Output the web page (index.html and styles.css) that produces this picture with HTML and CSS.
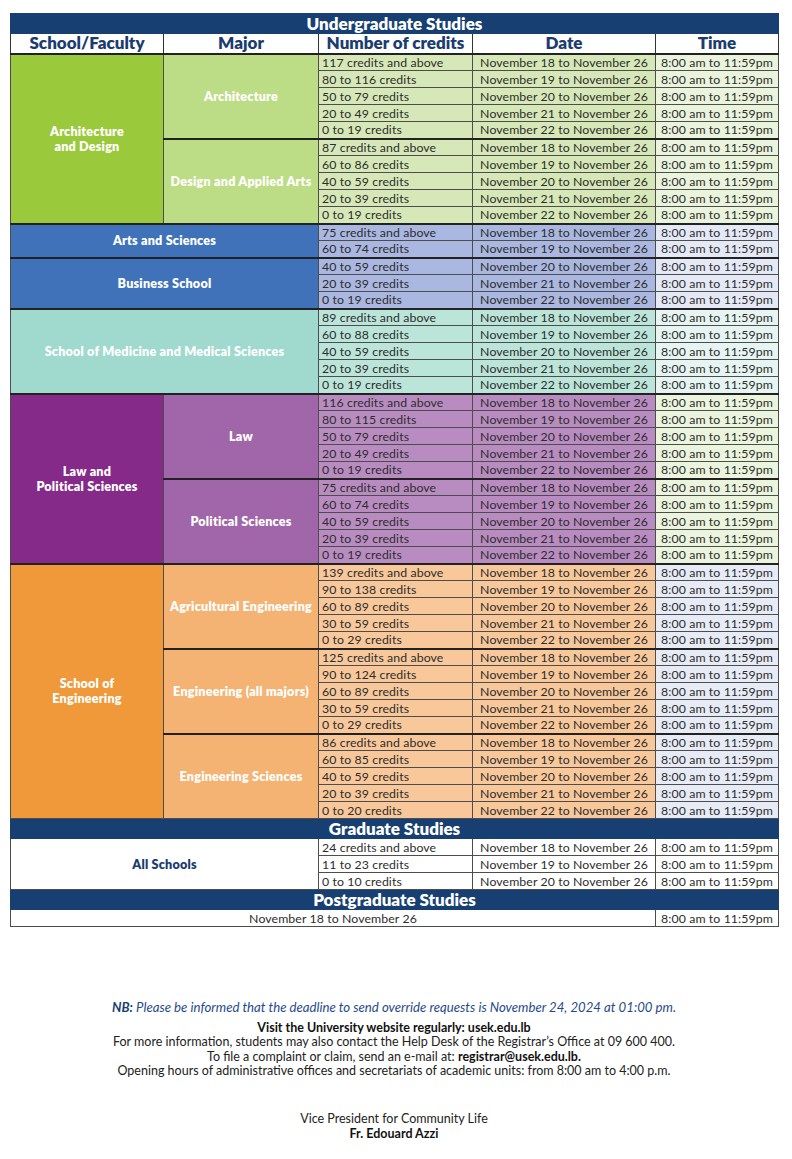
FILE: index.html
```html
<!DOCTYPE html>
<html>
<head>
<meta charset="utf-8">
<link rel="stylesheet" href="styles.css">
</head>
<body>
<div class="page">
<table class="sched">
<colgroup><col class="c1"><col class="c2"><col class="c3"><col class="c4"><col class="c5"></colgroup>
<tr class="band"><th colspan="5">Undergraduate Studies</th></tr>
<tr class="head"><th>School/Faculty</th><th>Major</th><th>Number of credits</th><th>Date</th><th>Time</th></tr>

<tr class="arch top"><td class="school" rowspan="10">Architecture<br>and Design</td><td class="major" rowspan="5">Architecture</td><td class="cr">117 credits and above</td><td class="dt">November 18 to November 26</td><td class="tm">8:00 am to 11:59pm</td></tr>
<tr class="arch"><td class="cr">80 to 116 credits</td><td class="dt">November 19 to November 26</td><td class="tm">8:00 am to 11:59pm</td></tr>
<tr class="arch"><td class="cr">50 to 79 credits</td><td class="dt">November 20 to November 26</td><td class="tm">8:00 am to 11:59pm</td></tr>
<tr class="arch"><td class="cr">20 to 49 credits</td><td class="dt">November 21 to November 26</td><td class="tm">8:00 am to 11:59pm</td></tr>
<tr class="arch"><td class="cr">0 to 19 credits</td><td class="dt">November 22 to November 26</td><td class="tm">8:00 am to 11:59pm</td></tr>
<tr class="arch top"><td class="major" rowspan="5">Design and Applied Arts</td><td class="cr">87 credits and above</td><td class="dt">November 18 to November 26</td><td class="tm">8:00 am to 11:59pm</td></tr>
<tr class="arch"><td class="cr">60 to 86 credits</td><td class="dt">November 19 to November 26</td><td class="tm">8:00 am to 11:59pm</td></tr>
<tr class="arch"><td class="cr">40 to 59 credits</td><td class="dt">November 20 to November 26</td><td class="tm">8:00 am to 11:59pm</td></tr>
<tr class="arch"><td class="cr">20 to 39 credits</td><td class="dt">November 21 to November 26</td><td class="tm">8:00 am to 11:59pm</td></tr>
<tr class="arch"><td class="cr">0 to 19 credits</td><td class="dt">November 22 to November 26</td><td class="tm">8:00 am to 11:59pm</td></tr>

<tr class="arts top"><td class="school" colspan="2" rowspan="2">Arts and Sciences</td><td class="cr">75 credits and above</td><td class="dt">November 18 to November 26</td><td class="tm">8:00 am to 11:59pm</td></tr>
<tr class="arts"><td class="cr">60 to 74 credits</td><td class="dt">November 19 to November 26</td><td class="tm">8:00 am to 11:59pm</td></tr>
<tr class="arts top"><td class="school" colspan="2" rowspan="3">Business School</td><td class="cr">40 to 59 credits</td><td class="dt">November 20 to November 26</td><td class="tm">8:00 am to 11:59pm</td></tr>
<tr class="arts"><td class="cr">20 to 39 credits</td><td class="dt">November 21 to November 26</td><td class="tm">8:00 am to 11:59pm</td></tr>
<tr class="arts"><td class="cr">0 to 19 credits</td><td class="dt">November 22 to November 26</td><td class="tm">8:00 am to 11:59pm</td></tr>

<tr class="med top"><td class="school" colspan="2" rowspan="5">School of Medicine and Medical Sciences</td><td class="cr">89 credits and above</td><td class="dt">November 18 to November 26</td><td class="tm">8:00 am to 11:59pm</td></tr>
<tr class="med"><td class="cr">60 to 88 credits</td><td class="dt">November 19 to November 26</td><td class="tm">8:00 am to 11:59pm</td></tr>
<tr class="med"><td class="cr">40 to 59 credits</td><td class="dt">November 20 to November 26</td><td class="tm">8:00 am to 11:59pm</td></tr>
<tr class="med"><td class="cr">20 to 39 credits</td><td class="dt">November 21 to November 26</td><td class="tm">8:00 am to 11:59pm</td></tr>
<tr class="med"><td class="cr">0 to 19 credits</td><td class="dt">November 22 to November 26</td><td class="tm">8:00 am to 11:59pm</td></tr>

<tr class="law top"><td class="school" rowspan="10">Law and<br>Political Sciences</td><td class="major" rowspan="5">Law</td><td class="cr">116 credits and above</td><td class="dt">November 18 to November 26</td><td class="tm">8:00 am to 11:59pm</td></tr>
<tr class="law"><td class="cr">80 to 115 credits</td><td class="dt">November 19 to November 26</td><td class="tm">8:00 am to 11:59pm</td></tr>
<tr class="law"><td class="cr">50 to 79 credits</td><td class="dt">November 20 to November 26</td><td class="tm">8:00 am to 11:59pm</td></tr>
<tr class="law"><td class="cr">20 to 49 credits</td><td class="dt">November 21 to November 26</td><td class="tm">8:00 am to 11:59pm</td></tr>
<tr class="law"><td class="cr">0 to 19 credits</td><td class="dt">November 22 to November 26</td><td class="tm">8:00 am to 11:59pm</td></tr>
<tr class="law top"><td class="major" rowspan="5">Political Sciences</td><td class="cr">75 credits and above</td><td class="dt">November 18 to November 26</td><td class="tm">8:00 am to 11:59pm</td></tr>
<tr class="law"><td class="cr">60 to 74 credits</td><td class="dt">November 19 to November 26</td><td class="tm">8:00 am to 11:59pm</td></tr>
<tr class="law"><td class="cr">40 to 59 credits</td><td class="dt">November 20 to November 26</td><td class="tm">8:00 am to 11:59pm</td></tr>
<tr class="law"><td class="cr">20 to 39 credits</td><td class="dt">November 21 to November 26</td><td class="tm">8:00 am to 11:59pm</td></tr>
<tr class="law"><td class="cr">0 to 19 credits</td><td class="dt">November 22 to November 26</td><td class="tm">8:00 am to 11:59pm</td></tr>

<tr class="eng top"><td class="school" rowspan="15">School of<br>Engineering</td><td class="major" rowspan="5">Agricultural Engineering</td><td class="cr">139 credits and above</td><td class="dt">November 18 to November 26</td><td class="tm">8:00 am to 11:59pm</td></tr>
<tr class="eng"><td class="cr">90 to 138 credits</td><td class="dt">November 19 to November 26</td><td class="tm">8:00 am to 11:59pm</td></tr>
<tr class="eng"><td class="cr">60 to 89 credits</td><td class="dt">November 20 to November 26</td><td class="tm">8:00 am to 11:59pm</td></tr>
<tr class="eng"><td class="cr">30 to 59 credits</td><td class="dt">November 21 to November 26</td><td class="tm">8:00 am to 11:59pm</td></tr>
<tr class="eng"><td class="cr">0 to 29 credits</td><td class="dt">November 22 to November 26</td><td class="tm">8:00 am to 11:59pm</td></tr>
<tr class="eng top"><td class="major" rowspan="5">Engineering (all majors)</td><td class="cr">125 credits and above</td><td class="dt">November 18 to November 26</td><td class="tm">8:00 am to 11:59pm</td></tr>
<tr class="eng"><td class="cr">90 to 124 credits</td><td class="dt">November 19 to November 26</td><td class="tm">8:00 am to 11:59pm</td></tr>
<tr class="eng"><td class="cr">60 to 89 credits</td><td class="dt">November 20 to November 26</td><td class="tm">8:00 am to 11:59pm</td></tr>
<tr class="eng"><td class="cr">30 to 59 credits</td><td class="dt">November 21 to November 26</td><td class="tm">8:00 am to 11:59pm</td></tr>
<tr class="eng"><td class="cr">0 to 29 credits</td><td class="dt">November 22 to November 26</td><td class="tm">8:00 am to 11:59pm</td></tr>
<tr class="eng top"><td class="major" rowspan="5">Engineering Sciences</td><td class="cr">86 credits and above</td><td class="dt">November 18 to November 26</td><td class="tm">8:00 am to 11:59pm</td></tr>
<tr class="eng"><td class="cr">60 to 85 credits</td><td class="dt">November 19 to November 26</td><td class="tm">8:00 am to 11:59pm</td></tr>
<tr class="eng"><td class="cr">40 to 59 credits</td><td class="dt">November 20 to November 26</td><td class="tm">8:00 am to 11:59pm</td></tr>
<tr class="eng"><td class="cr">20 to 39 credits</td><td class="dt">November 21 to November 26</td><td class="tm">8:00 am to 11:59pm</td></tr>
<tr class="eng"><td class="cr">0 to 20 credits</td><td class="dt">November 22 to November 26</td><td class="tm">8:00 am to 11:59pm</td></tr>

<tr class="band"><th colspan="5">Graduate Studies</th></tr>
<tr class="grad"><td class="school" colspan="2" rowspan="3">All Schools</td><td class="cr">24 credits and above</td><td class="dt">November 18 to November 26</td><td class="tm">8:00 am to 11:59pm</td></tr>
<tr class="grad"><td class="cr">11 to 23 credits</td><td class="dt">November 19 to November 26</td><td class="tm">8:00 am to 11:59pm</td></tr>
<tr class="grad"><td class="cr">0 to 10 credits</td><td class="dt">November 20 to November 26</td><td class="tm">8:00 am to 11:59pm</td></tr>

<tr class="band"><th colspan="5">Postgraduate Studies</th></tr>
<tr class="grad"><td class="dt" colspan="4">November 18 to November 26</td><td class="tm">8:00 am to 11:59pm</td></tr>
</table>

<div class="notes">
<p class="nb"><b>NB:</b> Please be informed that the deadline to send override requests is November 24, 2024 at 01:00 pm.</p>
<p class="info"><b>Visit the University website regularly: usek.edu.lb</b><br>
For more information, students may also contact the Help Desk of the Registrar’s Office at 09 600 400.<br>
To file a complaint or claim, send an e-mail at: <b>registrar@usek.edu.lb.</b><br>
Opening hours of administrative offices and secretariats of academic units: from 8:00 am to 4:00 p.m.</p>
</div>

<div class="sign">
<p>Vice President for Community Life<br><b>Fr. Edouard Azzi</b></p>
</div>
</div>
</body>
</html>
```

FILE: styles.css
```css
* { box-sizing: border-box; }
html, body { margin: 0; padding: 0; background: #ffffff; }
body { font-family: "Lato", "Open Sans", sans-serif; color: #222; }
.page { width: 792px; padding: 13px 14px 0 10px; }

.sched { width: 768px; border-collapse: collapse; table-layout: fixed; border: 1px solid #888; }
.c1 { width: 153px; } .c2 { width: 155px; } .c3 { width: 154px; } .c4 { width: 183px; } .c5 { width: 123px; }

.sched td, .sched th { padding: 0 3px; border: 1px solid #4d4d4d; white-space: nowrap; overflow: hidden; }
.sched td { height: 17px; font-size: 12.3px; line-height: 15px; color: #2d2d2d; letter-spacing: 0.1px; }

.band th { background: #173f72; color: #fff; font-size: 17px; font-weight: 800; height: 20px; line-height: 18px; padding: 0; border-color: #173f72; }
.head th { background: #fff; color: #1b3c70; font-size: 17px; font-weight: 800; height: 20px; line-height: 18px; border-color: #333; }

.sched td.school, .sched td.major { color: #fff; font-weight: 800; font-size: 12.6px; line-height: 15px; text-align: center; white-space: normal; letter-spacing: 0.2px; padding: 0 2px; }
.cr { text-align: left; }
.dt, .tm { text-align: center; }

.top td { border-top: 2px solid #222; }

.arch .school { background: #9bc93c; }
.arch .major { background: #bddc86; }
.arch .cr, .arch .dt { background: #d7e8b8; }
.arch .tm { background: #eaf3dc; }

.arts .school { background: #3f72b9; }
.arts .cr, .arts .dt { background: #aab7e0; }
.arts .tm { background: #e5e9f6; }

.med .school { background: #a0d9cd; }
.med .cr, .med .dt { background: #bce5da; }
.med .tm { background: #e6f5f1; }

.law .school { background: #852a88; }
.law .major { background: #a066a9; }
.law .cr, .law .dt { background: #b98cc1; }
.law .tm { background: #ebf4dd; }

.eng .school { background: #f0993a; }
.eng .major { background: #f4b373; }
.eng .cr, .eng .dt { background: #f8c89b; }
.eng .tm { background: #e7ebf6; }

.grad td { background: #fff; }
.sched .grad td.school { color: #1b3c70; background: #fff; }

.notes { text-align: center; margin-top: 73px; font-size: 12.5px; line-height: 14.5px; color: #222; }
.notes p { margin: 0; }
.nb { color: #1f4b8a; font-style: italic; font-size: 13.2px; margin-bottom: 6px !important; }
.nb b { color: #173f72; }
.info b { color: #111; }

.sign { text-align: center; margin-top: 32px; font-size: 12.5px; line-height: 15px; color: #222; }
.sign p { margin: 0; }
.sign b { color: #111; }
```
